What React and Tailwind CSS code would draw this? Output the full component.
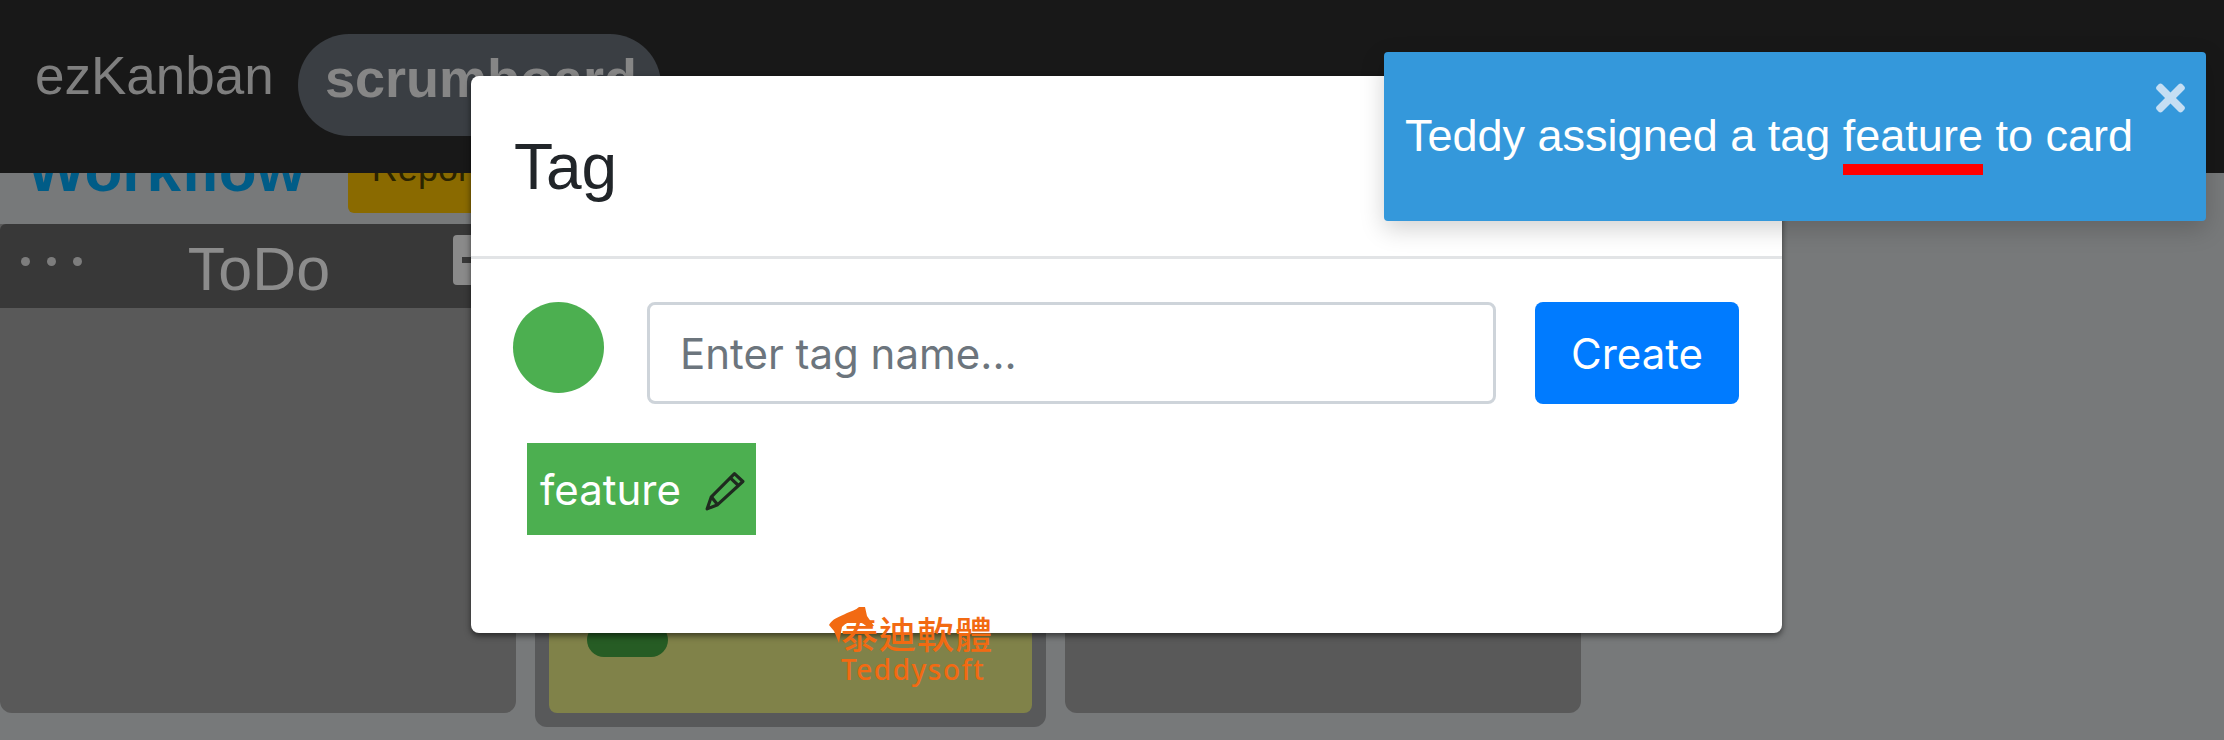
import { FaTimes } from 'react-icons/fa';

const sans = { fontFamily: '"Liberation Sans", Arial, sans-serif' };

const PencilIcon = () => (
  <svg viewBox="0 0 38 38" className="ml-[24px] mt-[3px] h-[40px] w-[40px]" fill="none" stroke="#1f2a1f" strokeWidth="3" strokeLinejoin="round">
    <path d="M28 2.5 36 10 12 32 2 36 6 24.5Z" />
    <path d="M24 6.5 32 14" />
    <path d="M6 24.5 12 32" />
  </svg>
);

const FoxMark = () => (
  <svg viewBox="0 0 50 40" className="absolute left-[-12px] top-[-5px] h-[40px] w-[50px]">
    <path d="M0 18C3 12 10 10 18 6 22 4 27 3 30 0H36L38 9 45 19H37C31 13 20 12 13 20L10 36 5 24Z" fill="#f26a12" />
    <path d="M13 21C18 13 32 13 39 21L34 25C27 20 21 20 15 25Z" fill="#ffffff" />
  </svg>
);

const Column = ({ children }) => (
  <div className="h-[489px] w-[516px] shrink-0 rounded-b-xl bg-[#595959]">{children}</div>
);

export default function App() {
  return (
    <div className="relative h-[740px] w-[2224px] overflow-hidden bg-[#77797a]" style={sans}>
      <header className="relative z-10 flex h-[173px] items-start bg-[#181818] pl-[35px] pt-[33px]">
        <span className="mt-[16px] text-[53px] leading-none text-[#7f7f7f]">ezKanban</span>
        <span className="absolute left-[298px] top-[34px] flex h-[102px] w-[363px] items-center rounded-[51px] bg-[#3a3e43] pb-[14px] pl-[27px] text-[54px] font-bold leading-none text-[#868686]">
          scrumboard
        </span>
      </header>

      <main>
        <div className="-mt-[43px] flex h-[94px] items-start pl-[27px]">
          <h1 className="text-[62px] font-bold leading-[80px] text-[#005c87]">Workflow</h1>
          <button className="ml-[43px] mt-[19px] flex h-[64px] items-start rounded-md bg-[#8a6a00] pl-[24px] pr-[40px] text-[36px] leading-[40px] text-[#2b2400]">Report</button>
        </div>

        <div className="flex items-start gap-[19px]">
          <Column>
            <div className="relative flex h-[84px] items-center justify-center rounded-t-md bg-[#383838]">
              <div className="absolute left-[21px] top-[33px] flex gap-[17px]">
                <i className="block h-[9px] w-[9px] rounded-full bg-[#7d7d7d]" />
                <i className="block h-[9px] w-[9px] rounded-full bg-[#7d7d7d]" />
                <i className="block h-[9px] w-[9px] rounded-full bg-[#7d7d7d]" />
              </div>
              <span className="mr-[-2px] mt-[6px] text-[61px] leading-none text-[#8c8c8c]">ToDo</span>
              <div className="absolute left-[453px] top-[11px] flex h-[50px] w-[40px] items-center rounded bg-[#8a8a8a] pl-[9px]">
                <div className="h-[6px] w-[22px] bg-[#383838]" />
              </div>
            </div>
          </Column>

          <div className="h-[503px] w-[511px] shrink-0 rounded-b-xl bg-[#58595a] px-[14px] pb-[14px]">
            <div className="flex h-full flex-col justify-end rounded-b-lg bg-[#808249] pb-[56px] pl-[38px]">
              <div className="h-[34px] w-[81px] rounded-[17px] bg-[#265c24]" />
            </div>
          </div>

          <Column />
        </div>
      </main>

      {/* tag dialog */}
      <section className="absolute left-[471px] top-[76px] z-20 h-[557px] w-[1311px] rounded-lg bg-white shadow-[0_3px_6px_rgba(0,0,0,0.55)]">
        <div className="flex h-[183px] items-center border-b-[3px] border-[#e2e4e6] pl-[43px]">
          <h2 className="mt-[2px] text-[64px] font-normal leading-none text-[#212529]">Tag</h2>
        </div>
        <div className="flex items-start pl-[42px] pr-[43px] pt-[43px]" style={{ fontFamily: 'Inter, sans-serif' }}>
          <div className="h-[91px] w-[91px] shrink-0 rounded-full bg-[#4caf50]" />
          <input
            readOnly
            placeholder="Enter tag name..."
            className="ml-[43px] h-[102px] min-w-0 flex-1 rounded-lg border-[3px] border-[#ced4da] bg-white pl-[30px] text-[42px] outline-none placeholder:text-[#6c757d]"
          />
          <button className="ml-[39px] h-[102px] w-[204px] shrink-0 rounded-lg bg-[#007bff] text-[42px] text-white">Create</button>
        </div>
        <div className="ml-[56px] mt-[39px] flex h-[92px] w-[229px] items-center bg-[#4caf50] pl-[13px] text-[42px] text-white" style={{ fontFamily: 'Inter, sans-serif' }}>
          <span>feature</span>
          <PencilIcon />
        </div>
      </section>

      {/* watermark */}
      <div className="absolute left-[841px] top-[612px] z-30 w-[156px] text-[#f26a12]">
        <FoxMark />
        <div className="relative text-[37px] font-medium leading-[42px] tracking-[1px]" style={{ fontFamily: '"Noto Sans CJK TC", sans-serif' }}>泰迪軟體</div>
        <div className="mt-[1px] text-[28px] font-medium leading-[28px] tracking-[1.5px]" style={{ fontFamily: '"Noto Sans", sans-serif' }}>Teddysoft</div>
      </div>

      {/* toast */}
      <aside className="absolute left-[1384px] top-[52px] z-40 h-[169px] w-[822px] rounded-sm bg-[#3498db] pl-[21px] pt-[58px] text-[45px] leading-[52px] text-white shadow-[0_8px_24px_rgba(0,0,0,0.18)]">
        <p className="whitespace-nowrap">
          Teddy assigned a tag <span className="inline-block border-b-[11px] border-[#ff0000] pb-[2px]">feature</span> to card
        </p>
        <FaTimes className="absolute right-[21px] top-[25px] h-[42px] w-[29px] text-[#c5def3]" />
      </aside>
    </div>
  );
}
